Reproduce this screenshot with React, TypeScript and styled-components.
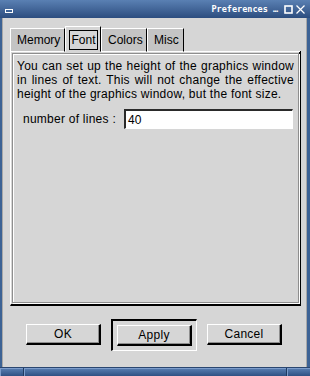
import React from "react";
import styled, { createGlobalStyle } from "styled-components";

const GlobalStyle = createGlobalStyle`
    html, body {
        margin: 0;
        padding: 0;
        background: #d6d6d6;
    }
    body {
        font-family: "Liberation Sans", Arial, sans-serif;
    }
`;

const Window = styled.div`
    width: 310px;
    height: 376px;
    display: flex;
    flex-direction: column;
    overflow: hidden;
`;

const TitleBar = styled.div`
    height: 18px;
    display: flex;
    align-items: center;
    background: linear-gradient(#5a80b3, #2c4d7f);
    color: #ffffff;
    flex-shrink: 0;
`;

const TitleText = styled.span`
    margin-left: auto;
    font-family: "DejaVu Sans Mono", monospace;
    font-size: 8.5px;
    font-weight: bold;
    margin-right: 6px;
`;

const TitleIcon = styled.svg`
    display: block;
    flex-shrink: 0;
`;

const Frame = styled.div`
    flex: 1;
    display: flex;
    flex-direction: column;
    background: #d6d6d6;
    border-left: 2px solid #3d6395;
    border-right: 3px solid #3d6395;
    box-shadow: inset 1px 0 0 #a8a8a8, inset -1px 0 0 #a8a8a8;
    padding: 8px 6px 0 8px;
`;

const TabRow = styled.div`
    display: flex;
    align-items: flex-end;
    height: 26px;
`;

type TabProps = { $active?: boolean; $w: number };

const Tab = styled.div<TabProps>`
    width: ${(p) => p.$w}px;
    height: ${(p) => (p.$active ? "26px" : "24px")};
    box-sizing: border-box;
    padding: ${(p) => (p.$active ? "3px 0 0 3px" : "0 0 0 6px")};
    display: flex;
    align-items: ${(p) => (p.$active ? "flex-start" : "center")};
    font-size: 12px;
    color: #000;
    background: ${(p) => (p.$active ? "#d6d6d6" : "#c4c4c4")};
    border-top: 1px solid #ffffff;
    border-left: 1px solid #ffffff;
    border-right: 1px solid #000000;
    border-bottom: 1px solid ${(p) => (p.$active ? "#d6d6d6" : "#ffffff")};
`;

const FocusLabel = styled.span`
    border: 1px solid #000;
    width: 29px;
    height: 20px;
    box-sizing: border-box;
    display: flex;
    align-items: center;
    justify-content: center;
`;

const TabFiller = styled.div`
    flex: 1;
    height: 1px;
    background: #ffffff;
    border-right: 1px solid #000;
    box-sizing: border-box;
`;

const Panel = styled.div`
    height: 254px;
    box-sizing: border-box;
    border-left: 1px solid #ffffff;
    border-right: 2px solid #000000;
    border-bottom: 2px solid #000000;
    padding: 1px;
    display: flex;
`;

const Engraved = styled.div`
    flex: 1;
    border: 1px solid #8e8e8e;
    box-shadow: inset 1px 1px 0 #ffffff, 1px 1px 0 #ffffff;
    padding: 5px 4px 0 4px;
`;

const Para = styled.div`
    font-size: 12px;
    line-height: 14px;
    letter-spacing: 0.25px;
    color: #000;
    width: 277px;
`;

type LineProps = { $justify?: boolean };

const Line = styled.div<LineProps>`
    text-align: ${(p) => (p.$justify ? "justify" : "left")};
    text-align-last: ${(p) => (p.$justify ? "justify" : "left")};
    white-space: nowrap;
`;

const FieldRow = styled.div`
    display: flex;
    align-items: center;
    margin-top: 8px;
    padding-left: 6px;
`;

const FieldLabel = styled.span`
    font-size: 12px;
    letter-spacing: 0.25px;
    width: 101px;
`;

const Input = styled.div`
    width: 169px;
    height: 20px;
    box-sizing: border-box;
    background: #ffffff;
    border-top: 2px solid #2a2a2a;
    border-left: 2px solid #2a2a2a;
    border-bottom: 1px solid #ffffff;
    border-right: 1px solid #ffffff;
    font-size: 12px;
    padding-left: 2px;
    display: flex;
    align-items: center;
`;

const ButtonRow = styled.div`
    display: flex;
    align-items: center;
    gap: 10px;
    padding-left: 16px;
    margin-top: 12px;
    height: 33px;
`;

const Button = styled.div`
    width: 75px;
    height: 21px;
    box-sizing: border-box;
    display: flex;
    align-items: center;
    justify-content: center;
    font-size: 12px;
    letter-spacing: 0.25px;
    background: #d6d6d6;
    border-top: 1px solid #ffffff;
    border-left: 1px solid #ffffff;
    border-right: 2px solid #000000;
    border-bottom: 2px solid #000000;
    box-shadow: inset -1px -1px 0 #8e8e8e;
`;

const DefaultFrame = styled.div`
    box-sizing: border-box;
    padding: 4px;
    border-top: 2px solid #000000;
    border-left: 2px solid #000000;
    border-right: 1px solid #ffffff;
    border-bottom: 1px solid #ffffff;
`;

const BottomBar = styled.div`
    height: 8px;
    flex-shrink: 0;
    display: flex;
    background: linear-gradient(#5a80b3, #2f5184);
    border-top: 1px solid #2a4670;
`;

type SegProps = { $w?: number };

const Segment = styled.div<SegProps>`
    width: ${(p) => (p.$w ? `${p.$w}px` : "auto")};
    flex: ${(p) => (p.$w ? "none" : "1")};
    border-right: 1px solid #1f3a60;
    box-shadow: inset 1px 1px 0 #7c9ccb;
    &:last-child {
        border-right: none;
    }
`;

export default function App() {
    return (
        <Window>
            <GlobalStyle />
            <TitleBar>
                <TitleIcon width="14" height="18" viewBox="0 0 14 18" style={{ marginLeft: 4 }}>
                    <rect x="1.5" y="9.5" width="7" height="3" fill="#3f6598" stroke="#ffffff" strokeWidth="1" />
                </TitleIcon>
                <TitleText>Preferences …</TitleText>
                <TitleIcon width="9" height="18" viewBox="0 0 9 18">
                    <rect x="1" y="6" width="7" height="7" fill="none" stroke="#ffffff" strokeWidth="1.6" />
                </TitleIcon>
                <TitleIcon width="14" height="18" viewBox="0 0 14 18" style={{ marginRight: 3 }}>
                    <path d="M3.5 5.5 L11.5 13.5 M11.5 5.5 L3.5 13.5" stroke="#ffffff" strokeWidth="1.2" />
                </TitleIcon>
            </TitleBar>
            <Frame>
                <TabRow>
                    <Tab $w={55}>Memory</Tab>
                    <Tab $w={36} $active>
                        <FocusLabel>Font</FocusLabel>
                    </Tab>
                    <Tab $w={46}>Colors</Tab>
                    <Tab $w={37}>Misc</Tab>
                    <TabFiller />
                </TabRow>
                <Panel>
                    <Engraved>
                        <Para>
                            <Line $justify>You can set up the height of the graphics window</Line>
                            <Line $justify>in lines of text. This will not change the effective</Line>
                            <Line>height of the graphics window, but the font size.</Line>
                        </Para>
                        <FieldRow>
                            <FieldLabel>number of lines :</FieldLabel>
                            <Input>40</Input>
                        </FieldRow>
                    </Engraved>
                </Panel>
                <ButtonRow>
                    <Button>OK</Button>
                    <DefaultFrame>
                        <Button>Apply</Button>
                    </DefaultFrame>
                    <Button>Cancel</Button>
                </ButtonRow>
            </Frame>
            <BottomBar>
                <Segment $w={23} />
                <Segment />
                <Segment $w={23} />
            </BottomBar>
        </Window>
    );
}
